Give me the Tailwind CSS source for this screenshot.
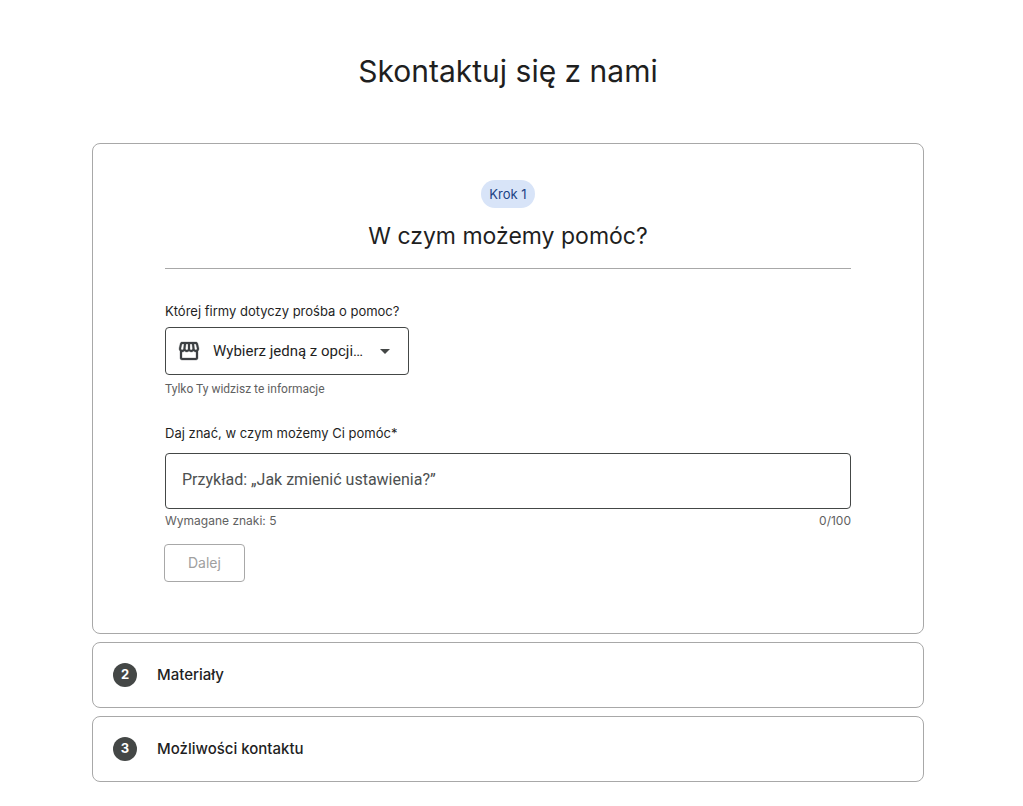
<!DOCTYPE html>
<html lang="pl">
<head>
<meta charset="utf-8">
<meta name="viewport" content="width=device-width, initial-scale=1">
<title>Skontaktuj się z nami</title>
<script src="https://cdn.jsdelivr.net/npm/@tailwindcss/browser@4"></script>
</head>
<body class="bg-white pr-[7px] font-['Inter',sans-serif] text-[#1f1f1f]">
<main class="mx-auto w-full max-w-[832px] pt-12 pb-6">
  <h1 class="text-center text-[30px] leading-[46px]">Skontaktuj się z nami</h1>

  <section class="mt-[49px] rounded-lg border border-[#a8a8a8] px-[72px] pt-9 pb-[51px]">
    <header class="flex flex-col items-center border-b border-[#a8a8a8] pb-4">
      <span class="rounded-full bg-[#d8e4f8] px-2 text-[13px] leading-7 text-[#1c4284]">Krok 1</span>
      <h2 class="mt-3 text-[23px] leading-8">W czym możemy pomóc?</h2>
    </header>

    <form>
      <label for="company" class="mt-8 block text-[13px] leading-5">Której firmy dotyczy prośba o pomoc?</label>
      <div class="relative mt-[6px] w-[244px]">
        <select id="company" class="h-12 w-full appearance-none rounded border border-[#444746] bg-white pr-10 pl-[47px] font-['Roboto',sans-serif] text-[15px] text-[#1f1f1f]">
          <option>Wybierz jedną z opcji…</option>
        </select>
        <svg class="pointer-events-none absolute top-3 left-3 size-6 fill-[#3c4043] stroke-[#3c4043] stroke-[0.3]" viewBox="0 0 24 24" aria-hidden="true"><path d="M21.9 8.89l-1.05-4.37c-.22-.9-1-1.52-1.91-1.52H5.05c-.9 0-1.69.63-1.9 1.52L2.1 8.89c-.24 1.02-.02 2.06.62 2.88.08.11.19.19.28.29V19c0 1.1.9 2 2 2h14c1.1 0 2-.9 2-2v-6.94c.09-.09.2-.18.28-.28.64-.82.87-1.87.62-2.89zm-2.99-3.9l1.05 4.37c.1.42.01.84-.25 1.17-.14.18-.44.47-.94.47-.61 0-1.14-.49-1.21-1.14L16.98 5l1.93-.01zM13 5h1.96l.54 4.52c.05.39-.07.78-.33 1.07-.22.26-.54.41-.95.41-.67 0-1.22-.59-1.22-1.31V5zM8.49 9.52L9.04 5H11v4.69c0 .72-.55 1.31-1.29 1.31-.34 0-.65-.15-.89-.41-.25-.29-.37-.68-.33-1.07zm-4.45-.16L5.05 5h1.97l-.58 4.86c-.08.65-.6 1.14-1.21 1.14-.49 0-.8-.29-.93-.47-.27-.32-.36-.75-.26-1.17zM5 19v-6.03c.08.01.15.03.23.03.87 0 1.66-.36 2.24-.95.6.6 1.4.95 2.31.95.87 0 1.65-.36 2.23-.93.59.57 1.39.93 2.29.93.84 0 1.64-.35 2.24-.95.58.59 1.37.95 2.24.95.08 0 .15-.02.23-.03V19H5z"/></svg>
        <svg class="pointer-events-none absolute top-3 right-3 size-6 fill-[#444746]" viewBox="0 0 24 24" aria-hidden="true"><path d="M7 10l5 5 5-5z"/></svg>
      </div>
      <p class="mt-1 font-['Roboto',sans-serif] text-xs leading-5 text-[#5f6161]">Tylko Ty widzisz te informacje</p>

      <label for="issue" class="mt-6 block text-[13px] leading-5">Daj znać, w czym możemy Ci pomóc*</label>
      <input id="issue" type="text" maxlength="100" placeholder="Przykład: „Jak zmienić ustawienia?”" class="mt-[10px] block h-14 w-full rounded border border-[#444746] px-4 pb-1 font-['Roboto',sans-serif] text-base placeholder:text-[#4d5050]">
      <div class="mt-[2px] flex justify-between text-xs leading-5 text-[#5f6161]">
        <span>Wymagane znaki: 5</span>
        <span>0/100</span>
      </div>
      <button type="button" disabled class="mt-[13px] -ml-px block h-[38px] rounded border border-[#a8a8a8] px-[23px] text-sm text-[#a0a0a0]">Dalej</button>
    </form>
  </section>

  <section class="mt-2 flex h-[66px] items-center gap-5 rounded-lg border border-[#a8a8a8] px-5">
    <span class="flex size-6 items-center justify-center rounded-full bg-[#444746] text-[13px] font-bold text-white">2</span>
    <h2 class="text-[15px] font-medium">Materiały</h2>
  </section>
  <section class="mt-2 flex h-[66px] items-center gap-5 rounded-lg border border-[#a8a8a8] px-5">
    <span class="flex size-6 items-center justify-center rounded-full bg-[#444746] text-[13px] font-bold text-white">3</span>
    <h2 class="text-[15px] font-medium">Możliwości kontaktu</h2>
  </section>
</main>
</body>
</html>
